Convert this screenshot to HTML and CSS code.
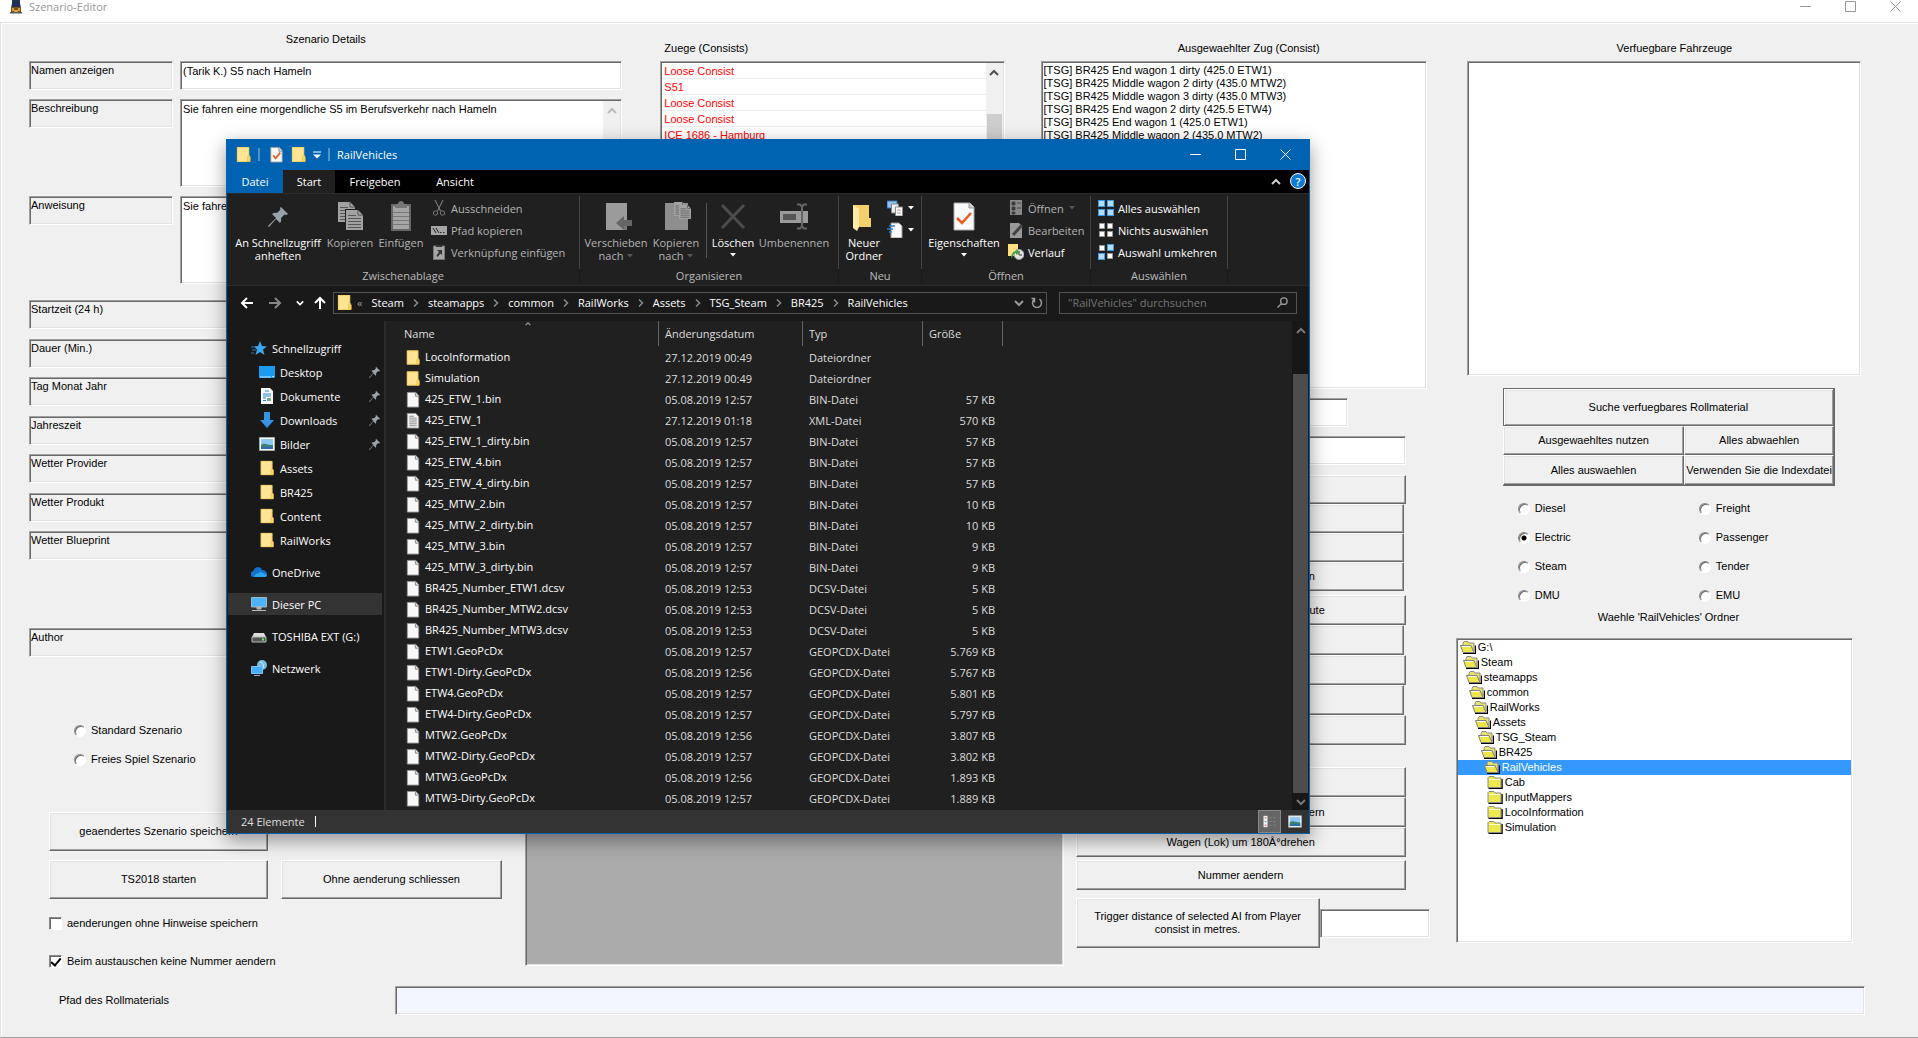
FILE: index.html
```html
<!DOCTYPE html>
<html lang="de">
<head>
<meta charset="utf-8">
<title>Szenario-Editor</title>
<link rel="stylesheet" href="styles.css">
</head>
<body>
<svg class="sprite" aria-hidden="true">
  <symbol id="folder" viewBox="0 0 16 18"><path d="M1 1h13v9h1v7H1z" fill="#ffe593"/><path d="M1.500 1.500h12v9l1 1v5h-13z" fill="none" stroke="#f3cf5e"/><path d="M12.500 16.500v-5l1-1 1.500 1v5z" fill="#ffe07c" stroke="#e9bd3d"/></symbol>
  <symbol id="file" viewBox="0 0 14 18"><path d="M1 1.500h9l3 3.500v12H1z" fill="#f8f8f8" stroke="#9a9a9a"/><path d="M9.500 1.500V5.500H13" fill="#ddd" stroke="#888"/></symbol>
  <symbol id="textfile" viewBox="0 0 14 18"><path d="M1 1.500h9l3 3.500v12H1z" fill="#f4f4f4" stroke="#9a9a9a"/><path d="M3 4.500h5M3 6.500h8M3 8.500h8M3 10.500h8M3 12.500h8M3 14.500h8" stroke="#8a8a8a"/></symbol>
  <symbol id="checkfile" viewBox="0 0 14 18"><path d="M1 1.500h9l3 3.500v12H1z" fill="#fafafa" stroke="#9a9a9a"/><path d="M9.500 1.500V5.500H13" fill="#ddd" stroke="#888"/><path d="M3.500 10l2.500 3 5-6" fill="none" stroke="#e8622a" stroke-width="2"/></symbol>
  <symbol id="pin" viewBox="0 0 20 20"><path d="M13 0l7 7-1.500 1-2-.5-3.500 3.500c.5 2 0 4-1 5L8 12l-7 8-1-1 8-8-4-4c1.500-1 3-1.400 5-1l3.500-3.500-.5-1.500z" fill="#98a2aa"/></symbol>
  <symbol id="chev" viewBox="0 0 10 10"><path d="M1 3l4 4 4-4" fill="none" stroke="currentColor" stroke-width="2"/></symbol>
  <symbol id="chevup" viewBox="0 0 10 10"><path d="M1 7l4-4 4 4" fill="none" stroke="currentColor" stroke-width="2"/></symbol>
  <symbol id="crumb" viewBox="0 0 6 10"><path d="M1 1.500L4.500 5 1 8.500" fill="none" stroke="#8a8a8a" stroke-width="1.500"/></symbol>
  <symbol id="tri" viewBox="0 0 6 4"><path d="M0 0h6L3 3.500z" fill="currentColor"/></symbol>
  <symbol id="page" viewBox="0 0 17 20"><path d="M0 0h12l5 5v15H0z" fill="#a2a2a2"/><path d="M12 0v5h5" fill="none" stroke="#555"/><path d="M2 5.500h8M2 8.500h13M2 11.500h13M2 14.500h13M2 17.500h13" stroke="#555"/></symbol>
  <symbol id="open98" viewBox="0 0 16 13"><path d="M3 12.500h12.500V4.500" fill="none" stroke="#000" stroke-width="1.500"/><path d="M3 10V2.500l1-2h4l1 1.500h5V10z" fill="#e8e26a" stroke="#8a8a8a"/><path d="M.5 4.500h10.500l3 7H3z" fill="#ece64a" stroke="#808080"/><path d="M2 5.500h8.500" stroke="#fff"/></symbol>
  <symbol id="shut98" viewBox="0 0 15 13"><path d="M1 12.500h13.500V3" fill="none" stroke="#000" stroke-width="1.500"/><path d="M.5 11.500v-10l1-1h5l1 1.500h6v9.500z" fill="#ece84e" stroke="#8a8a8a"/><path d="M1.500 3.500h11" stroke="#fffbd0"/></symbol>
  <symbol id="photo" viewBox="0 0 16 14"><path d="M.5.500h15v13H.5z" fill="#fff" stroke="#aaa"/><path d="M2 2h12v10H2z" fill="#8cc8f2"/><path d="M2 8c3-3 6 0 12 0v4H2z" fill="#3b7f78"/><path d="M2 10h12v2H2z" fill="#2d6ca8"/></symbol>
</svg>

<header class="titlebar">
  <svg class="appicon" viewBox="0 0 12 14"><path d="M2 0h8v3l1 5H1l1-5z" fill="#1f3157"/><path d="M1 7h10v6H1z" fill="#7a4e1c"/><path d="M2 8h2v3H2zM8 8h2v3H8zM4 10h4v2H4z" fill="#e0a030"/><path d="M0 12h12v1.500H0z" fill="#55575c"/></svg>
  <h1>Szenario-Editor</h1>
  <div class="winbtns">
    <button aria-label="Minimieren"><svg viewBox="0 0 11 11"><path d="M0 5.500h11" stroke="currentColor"/></svg></button>
    <button aria-label="Maximieren"><svg viewBox="0 0 11 11"><path d="M.5.500h10v10H.5z" fill="none" stroke="currentColor"/></svg></button>
    <button aria-label="Schließen"><svg viewBox="0 0 11 11"><path d="M.5.500l10 10M10.500.500l-10 10" stroke="currentColor"/></svg></button>
  </div>
</header>

<main class="panel">
  <div class="layout">
    <section class="details">
      <h2>Szenario Details</h2>
      <div class="fields">
        <label class="tag sunken" for="name">Namen anzeigen</label>
        <input class="box sunken" id="name" value="(Tarik K.) S5 nach Hameln">
        <label class="tag sunken" for="desc">Beschreibung</label>
        <div class="memo sunken"><textarea id="desc">Sie fahren eine morgendliche S5 im Berufsverkehr nach Hameln</textarea><div class="bar off"><svg><use href="#chevup"/></svg></div></div>
        <label class="tag sunken" for="brief">Anweisung</label>
        <div class="memo sunken"><textarea id="brief">Sie fahren</textarea><div class="bar off"><svg><use href="#chevup"/></svg></div></div>
      </div>
      <div class="meta">
        <div><label class="tag sunken" for="m1">Startzeit (24 h)</label><input class="box sunken" id="m1"></div>
        <div><label class="tag sunken" for="m2">Dauer (Min.)</label><input class="box sunken" id="m2"></div>
        <div><label class="tag sunken" for="m3">Tag Monat Jahr</label><input class="box sunken" id="m3"></div>
        <div><label class="tag sunken" for="m4">Jahreszeit</label><input class="box sunken" id="m4"></div>
        <div><label class="tag sunken" for="m5">Wetter Provider</label><input class="box sunken" id="m5"></div>
        <div><label class="tag sunken" for="m6">Wetter Produkt</label><input class="box sunken" id="m6"></div>
        <div><label class="tag sunken" for="m7">Wetter Blueprint</label><input class="box sunken" id="m7"></div>
      </div>
      <div class="meta author"><div><label class="tag sunken" for="m8">Author</label><input class="box sunken" id="m8"></div></div>
    </section>

    <section class="consists">
      <h2>Zuege (Consists)</h2>
      <div class="list sunken">
        <ul class="rows"><li>Loose Consist</li><li>S51</li><li>Loose Consist</li><li>Loose Consist</li><li>ICE 1686 - Hamburg</li></ul>
        <div class="bar"><svg><use href="#chevup"/></svg><div class="thumb"></div></div>
      </div>
    </section>

    <section class="selected">
      <h2>Ausgewaehlter Zug (Consist)</h2>
      <ul class="wagons sunken"><li>[TSG] BR425 End wagon 1 dirty (425.0 ETW1)</li><li>[TSG] BR425 Middle wagon 2 dirty (435.0 MTW2)</li><li>[TSG] BR425 Middle wagon 3 dirty (435.0 MTW3)</li><li>[TSG] BR425 End wagon 2 dirty (425.5 ETW4)</li><li>[TSG] BR425 End wagon 1 (425.0 ETW1)</li><li>[TSG] BR425 Middle wagon 2 (435.0 MTW2)</li></ul>
    </section>

    <section class="save">
      <div class="kinds">
        <label class="opt"><input type="radio" name="kind">Standard Szenario</label>
        <label class="opt"><input type="radio" name="kind">Freies Spiel Szenario</label>
      </div>
      <div class="actions">
        <button class="btn">geaendertes Szenario speichern</button><span></span>
        <button class="btn">TS2018 starten</button>
        <button class="btn">Ohne aenderung schliessen</button>
      </div>
      <div class="checks">
        <label class="opt"><input type="checkbox">aenderungen ohne Hinweise speichern</label>
        <label class="opt"><input type="checkbox" checked>Beim austauschen keine Nummer aendern</label>
      </div>
    </section>

    <div class="canvas sunken"></div>

    <section class="tools">
      <input class="box sunken short" aria-label="Zugname">
      <input class="box sunken" aria-label="Zugnummer">
      <div class="stack tight">
        <button class="btn" aria-label="Aktion 1"></button>
        <button class="btn narrow" aria-label="Aktion 2"></button>
        <button class="btn narrow" aria-label="Aktion 3"></button>
        <button class="btn narrow tail">n</button>
      </div>
      <div class="stack">
        <button class="btn tail">ute</button>
        <button class="btn narrow" aria-label="Aktion 4"></button>
        <button class="btn" aria-label="Aktion 5"></button>
        <button class="btn narrow" aria-label="Aktion 6"></button>
        <button class="btn" aria-label="Aktion 7"></button>
      </div>
      <div class="stack lower">
        <button class="btn" aria-label="Aktion 8"></button>
        <button class="btn tail">ern</button>
        <button class="btn">Wagen (Lok) um 180Â°drehen</button>
      </div>
      <button class="btn number">Nummer aendern</button>
      <div class="trigger"><button class="btn">Trigger distance of selected AI from Player consist in metres.</button><input class="box sunken" aria-label="Trigger distance"></div>
    </section>

    <section class="stock">
      <h2>Verfuegbare Fahrzeuge</h2>
      <div class="vehicles sunken"></div>
      <div class="pick">
        <button class="btn default">Suche verfuegbares Rollmaterial</button>
        <button class="btn">Ausgewaehltes nutzen</button>
        <button class="btn">Alles abwaehlen</button>
        <button class="btn">Alles auswaehlen</button>
        <button class="btn">Verwenden Sie die Indexdatei</button>
      </div>
      <div class="types">
        <label class="opt"><input type="radio" name="type">Diesel</label><label class="opt"><input type="radio" name="cls">Freight</label>
        <label class="opt"><input type="radio" name="type" checked>Electric</label><label class="opt"><input type="radio" name="cls">Passenger</label>
        <label class="opt"><input type="radio" name="type">Steam</label><label class="opt"><input type="radio" name="cls">Tender</label>
        <label class="opt"><input type="radio" name="type">DMU</label><label class="opt"><input type="radio" name="cls">EMU</label>
      </div>
      <h3>Waehle 'RailVehicles' Ordner</h3>
      <ul class="tree sunken">
        <li style="--d:0"><svg><use href="#open98"/></svg>G:\</li>
        <li style="--d:1"><svg><use href="#open98"/></svg>Steam</li>
        <li style="--d:2"><svg><use href="#open98"/></svg>steamapps</li>
        <li style="--d:3"><svg><use href="#open98"/></svg>common</li>
        <li style="--d:4"><svg><use href="#open98"/></svg>RailWorks</li>
        <li style="--d:5"><svg><use href="#open98"/></svg>Assets</li>
        <li style="--d:6"><svg><use href="#open98"/></svg>TSG_Steam</li>
        <li style="--d:7"><svg><use href="#open98"/></svg>BR425</li>
        <li class="sel" style="--d:8"><svg><use href="#open98"/></svg>RailVehicles</li>
        <li style="--d:9"><svg><use href="#shut98"/></svg>Cab</li>
        <li style="--d:9"><svg><use href="#shut98"/></svg>InputMappers</li>
        <li style="--d:9"><svg><use href="#shut98"/></svg>LocoInformation</li>
        <li style="--d:9"><svg><use href="#shut98"/></svg>Simulation</li>
      </ul>
    </section>
  </div>
  <div class="path"><label for="path">Pfad des Rollmaterials</label><input class="box sunken" id="path"></div>
</main>

<section class="explorer" aria-label="RailVehicles">
  <div class="cap">
    <svg class="i16"><use href="#folder"/></svg><i></i><svg class="i16"><use href="#checkfile"/></svg><svg class="i16"><use href="#folder"/></svg>
    <svg class="qa" viewBox="0 0 8 8"><path d="M0 1h8" stroke="#fff"/><path d="M0 3.500h8L4 7.500z" fill="#fff"/></svg><i></i>
    <span>RailVehicles</span>
    <div class="winbtns">
      <button aria-label="Minimieren"><svg viewBox="0 0 11 11"><path d="M0 5.500h11" stroke="currentColor"/></svg></button>
      <button aria-label="Maximieren"><svg viewBox="0 0 11 11"><path d="M.5.500h10v10H.5z" fill="none" stroke="currentColor"/></svg></button>
      <button aria-label="Schließen"><svg viewBox="0 0 11 11"><path d="M.5.500l10 10M10.500.500l-10 10" stroke="currentColor"/></svg></button>
    </div>
  </div>
  <nav class="tabs">
    <button class="datei">Datei</button><button class="on">Start</button><button>Freigeben</button><button>Ansicht</button>
    <svg class="fold"><use href="#chevup"/></svg><button class="help" aria-label="Hilfe">?</button>
  </nav>
  <div class="ribbon">
    <div class="group g1">
      <div class="items">
        <button class="big w94"><svg viewBox="0 0 32 32"><svg x="6" y="6" width="20" height="20"><use href="#pin"/></svg></svg>An Schnellzugriff anheften</button>
        <button class="big w50 dim"><svg viewBox="0 0 32 32"><svg x="4" y="1" width="17" height="20"><use href="#page"/></svg><path d="M11 8h14l5 5v18H11z" fill="#202020"/><svg x="12" y="9" width="17" height="20"><use href="#page"/></svg></svg>Kopieren</button>
        <button class="big w52 dim"><svg viewBox="0 0 32 32"><path d="M6 3h20v27H6z" fill="#666"/><path d="M8 5h16v23H8z" fill="#a5a5a5"/><path d="M10 3h3c0-4 6-4 6 0h3v4H10z" fill="#777"/><path d="M8 11.500h16M8 15.500h16M8 19.500h16M8 23.500h16" stroke="#777"/></svg>Einfügen</button>
        <div class="smalls">
          <button class="dim"><svg viewBox="0 0 16 16"><path d="M4 0l5.500 11M12 0L6.500 11" stroke="#8a8a8a"/><circle cx="4.500" cy="13" r="2.200" fill="none" stroke="#777"/><circle cx="11.500" cy="13" r="2.200" fill="none" stroke="#777"/></svg>Ausschneiden</button>
          <button class="dim"><svg viewBox="0 0 16 16"><path d="M0 4h16v9H0z" fill="#a5a5a5"/><path d="M2 6l3 5M5 6l3 5M9 10.500h1.500M12 10.500h1.500" stroke="#222"/></svg>Pfad kopieren</button>
          <button class="dim"><svg viewBox="0 0 16 16"><path d="M2.500 2h11v13.500h-11z" fill="#a5a5a5" stroke="#777"/><path d="M5 1h6v2H5zM6 6h5v5L9.500 9.500 6.500 13 5.500 11.500 8 8z" fill="#333"/></svg>Verknüpfung einfügen</button>
        </div>
      </div>
      <p>Zwischenablage</p>
    </div>
    <div class="group g2">
      <div class="items">
        <button class="big w66 dim"><svg viewBox="0 0 32 32"><path d="M6 2h21v27H6z" fill="#9b9b9b"/><path d="M24 19v10h3V19z" fill="#777"/><path d="M16 22l8-7v4h8v6h-8v4z" fill="#666"/></svg>Verschieben <span>nach <svg class="tri"><use href="#tri"/></svg></span></button>
        <button class="big w54 dim"><svg viewBox="0 0 32 32"><path d="M5 2h23v27H5z" fill="#8e8e8e"/><svg x="14" y="0" width="12" height="16"><use href="#page"/></svg><svg x="19" y="3" width="12" height="16"><use href="#page"/></svg></svg>Kopieren <span>nach <svg class="tri"><use href="#tri"/></svg></span></button>
        <i></i>
        <button class="big w52"><svg viewBox="0 0 32 32"><path d="M5 4l22 23M27 4L5 27" stroke="#4c4c4c" stroke-width="3"/></svg>Löschen<svg class="tri"><use href="#tri"/></svg></button>
        <button class="big w70 dim"><svg viewBox="0 0 32 32"><path d="M2 10h28v12H2z" fill="#9a9a9a"/><path d="M5 13h13v6H5z" fill="#555"/><path d="M19 3.500h3l2 2 2-2h3M24 5v21M19 27.500h3l2-2 2 2h3" stroke="#666" stroke-width="2" fill="none"/></svg>Umbenennen</button>
      </div>
      <p>Organisieren</p>
    </div>
    <div class="group g3">
      <div class="items">
        <button class="big w46"><svg viewBox="0 0 32 32"><path d="M5 4h16v13h2v9H9v3l-4-3z" fill="#f5cf6b"/><path d="M5 4l6 4v18l-2 4-4-3z" fill="#ffeba6"/></svg>Neuer Ordner</button>
        <div class="smalls">
          <button aria-label="Neues Element"><svg viewBox="0 0 16 16"><path d="M0 1h10v7H0z" fill="#8dc4ef" stroke="#2c77ba"/><path d="M4.500 4h7v9h-7z" fill="#eee" stroke="#888"/><path d="M8.500 7h7v9h-7z" fill="#fff" stroke="#888"/><path d="M10 10h4M10 13h4" stroke="#d87"/></svg><svg class="tri"><use href="#tri"/></svg></button>
          <button aria-label="Einfacher Zugriff"><svg viewBox="0 0 16 16"><path d="M4 1h8l3 3v12H4z" fill="#fafafa" stroke="#999"/><path d="M2 4h6M0 7h6M2 10h3" stroke="#2d7dd2" stroke-width="1.500"/></svg><svg class="tri"><use href="#tri"/></svg></button>
        </div>
      </div>
      <p>Neu</p>
    </div>
    <div class="group g4">
      <div class="items">
        <button class="big w80"><svg viewBox="0 0 32 32"><path d="M6 2h16l4 4v23H6z" fill="#fafafa" stroke="#aaa"/><path d="M21 2v5h5" fill="#ccc" stroke="#999"/><path d="M9 17l5 5 9-10" fill="none" stroke="#f0591c" stroke-width="2.500"/></svg>Eigenschaften<svg class="tri"><use href="#tri"/></svg></button>
        <div class="smalls">
          <button class="dim"><svg viewBox="0 0 16 16"><path d="M2 0h12v15H2z" fill="#888"/><path d="M4 2h3v3H4zM4 7h3v3H4zM4 12h3v2H4zM9 3h4M9 8h4" fill="#333" stroke="#444"/></svg>Öffnen <svg class="tri"><use href="#tri"/></svg></button>
          <button class="dim"><svg viewBox="0 0 16 16"><path d="M2 1h9l3 3v12H2z" fill="#999"/><path d="M5 13l9-10" stroke="#444" stroke-width="3"/></svg>Bearbeiten</button>
          <button><svg viewBox="0 0 16 16"><path d="M0 0h10v12H0z" fill="#ffdf80"/><circle cx="11" cy="10.500" r="5" fill="#e4e4e4" stroke="#999"/><path d="M11 7v4h3" stroke="#333" fill="none"/><path d="M3 15c0-5 2-8 6-8l-1-2 4 3-4 3v-2c-2 0-3 3-5 6z" fill="#3da23d"/></svg>Verlauf</button>
        </div>
      </div>
      <p>Öffnen</p>
    </div>
    <div class="group g5">
      <div class="items">
        <div class="smalls">
          <button><svg viewBox="0 0 16 16"><path d="M0 0h7v7H0zM9 0h7v7H9zM0 9h7v7H0zM9 9h7v7H9z" fill="#3c9be8"/><path d="M1 1h5v5H1zM10 1h5v5h-5zM1 10h5v5H1zM10 10h5v5h-5z" fill="#b5dcfb"/></svg>Alles auswählen</button>
          <button><svg viewBox="0 0 16 16"><path d="M1.500 1.500h5v5h-5zM9.500 1.500h5v5h-5zM1.500 9.500h5v5h-5zM9.500 9.500h5v5h-5z" fill="#fff" stroke="#999"/></svg>Nichts auswählen</button>
          <button><svg viewBox="0 0 16 16"><path d="M9 0h7v7H9zM0 9h7v7H0z" fill="#3c9be8"/><path d="M10 1h5v5h-5zM1 10h5v5H1z" fill="#b5dcfb"/><path d="M1.500 1.500h5v5h-5zM9.500 9.500h5v5h-5z" fill="#fff" stroke="#999"/></svg>Auswahl umkehren</button>
        </div>
      </div>
      <p>Auswählen</p>
    </div>
  </div>
  <div class="address">
    <button aria-label="Zurück"><svg viewBox="0 0 14 12"><path d="M13 6H2M7 1L2 6l5 5" fill="none" stroke="#fff" stroke-width="2"/></svg></button>
    <button aria-label="Vorwärts"><svg viewBox="0 0 14 12"><path d="M1 6h11M7 1l5 5-5 5" fill="none" stroke="#888" stroke-width="2"/></svg></button>
    <button class="mini" aria-label="Verlauf"><svg><use href="#chev"/></svg></button>
    <button class="up" aria-label="Nach oben"><svg viewBox="0 0 12 13"><path d="M6 13V2M1 7l5-5 5 5" fill="none" stroke="#fff" stroke-width="2"/></svg></button>
    <div class="crumbs">
      <svg class="i16"><use href="#folder"/></svg><span>«</span>
      <a href="#">Steam</a><svg><use href="#crumb"/></svg><a href="#">steamapps</a><svg><use href="#crumb"/></svg><a href="#">common</a><svg><use href="#crumb"/></svg><a href="#">RailWorks</a><svg><use href="#crumb"/></svg><a href="#">Assets</a><svg><use href="#crumb"/></svg><a href="#">TSG_Steam</a><svg><use href="#crumb"/></svg><a href="#">BR425</a><svg><use href="#crumb"/></svg><a href="#">RailVehicles</a>
      <button class="drop" aria-label="Vorherige Orte"><svg><use href="#chev"/></svg></button>
      <button aria-label="Aktualisieren"><svg viewBox="0 0 12 12"><path d="M8.500 2.200a4.500 4.500 0 1 1-5 0M3.500 5.500v-4h-3" fill="none" stroke="#999" stroke-width="1.500"/></svg></button>
    </div>
    <div class="search"><input aria-label="Suche" placeholder="&quot;RailVehicles&quot; durchsuchen"><svg viewBox="0 0 12 12"><circle cx="7.500" cy="4.500" r="3.500" fill="none" stroke="#999" stroke-width="1.500"/><path d="M5 7l-4.500 4.500" stroke="#999" stroke-width="1.500"/></svg></div>
  </div>
  <div class="body">
    <ul class="side">
      <li class="first"><svg viewBox="0 0 16 16"><path d="M9 1l2 5 5 .5-4 3 1.500 5.500-4.500-3-4.500 3L6 9.500l-3-3 4-.5z" fill="#3aa7ef"/><path d="M0 7h4M1 10h4M0 13h3" stroke="#2a78b8"/></svg>Schnellzugriff</li>
      <li class="sub"><svg viewBox="0 0 16 16"><path d="M0 2h16v12H0z" fill="#1a9bf0"/><path d="M1 13h11M13 12.500h2" stroke="#bfe4ff"/></svg>Desktop<svg class="p"><use href="#pin"/></svg></li>
      <li class="sub"><svg viewBox="0 0 16 16"><path d="M2 0h9l3 3v13H2z" fill="#f6f6f6"/><path d="M6 3h4M4 6h8M4 8h8M4 10h3M4 12.500h3" stroke="#2c86cf"/><path d="M8 10h4v3H8z" fill="#6ca88d"/></svg>Dokumente<svg class="p"><use href="#pin"/></svg></li>
      <li class="sub"><svg viewBox="0 0 16 16"><path d="M5 0h6v8h4l-7 8-7-8h4z" fill="#3794e4"/></svg>Downloads<svg class="p"><use href="#pin"/></svg></li>
      <li class="sub"><svg><use href="#photo"/></svg>Bilder<svg class="p"><use href="#pin"/></svg></li>
      <li class="sub"><svg><use href="#folder"/></svg>Assets</li>
      <li class="sub"><svg><use href="#folder"/></svg>BR425</li>
      <li class="sub"><svg><use href="#folder"/></svg>Content</li>
      <li class="sub"><svg><use href="#folder"/></svg>RailWorks</li>
      <li class="root"><svg viewBox="0 0 16 16"><path d="M3 13a3 3 0 0 1-.5-6C3 3 9 1 11 6c3 0 5 2 5 4s-1 3-3 3z" fill="#1271c9"/><path d="M4 13c-2-2 3-4 6-5l6 3c0 2-2 2-3 2z" fill="#2aa3ec"/></svg>OneDrive</li>
      <li class="root cur"><svg viewBox="0 0 16 16"><path d="M.5 1.500h15v9.500H.5z" fill="#4fb4f7" stroke="#9fb4c4"/><path d="M6 11h4v2H6zM1 14.500h14" fill="#aaa" stroke="#bbb"/></svg>Dieser PC</li>
      <li class="root"><svg viewBox="0 0 16 16"><path d="M3 5h10l2 4H1z" fill="#ddd"/><path d="M1 9h14v5H1z" fill="#555" stroke="#bbb"/><path d="M11 11.500h2" stroke="#5f5" stroke-width="2"/></svg>TOSHIBA EXT (G:)</li>
      <li class="root"><svg viewBox="0 0 16 16"><circle cx="11" cy="5" r="5" fill="#79bce0"/><path d="M9 2c3 0 4 3 3 6" stroke="#d3f0fa" fill="none"/><path d="M.5 6.500h11v7H.5z" fill="#45aef5" stroke="#79c5f7"/><path d="M3 15.500h6" stroke="#9ad"/></svg>Netzwerk</li>
    </ul>
    <div class="files">
      <table>
        <colgroup><col class="c1"><col class="c2"><col class="c3"><col class="c4"><col></colgroup>
        <thead><tr><th>Name<svg class="sort"><use href="#chevup"/></svg></th><th>Änderungsdatum</th><th>Typ</th><th>Größe</th><td></td></tr></thead>
        <tbody>
        <tr><td><svg><use href="#folder"/></svg>LocoInformation</td><td>27.12.2019 00:49</td><td>Dateiordner</td><td></td><td></td></tr>
        <tr><td><svg><use href="#folder"/></svg>Simulation</td><td>27.12.2019 00:49</td><td>Dateiordner</td><td></td><td></td></tr>
        <tr><td><svg><use href="#file"/></svg>425_ETW_1.bin</td><td>05.08.2019 12:57</td><td>BIN-Datei</td><td>57 KB</td><td></td></tr>
        <tr><td><svg><use href="#textfile"/></svg>425_ETW_1</td><td>27.12.2019 01:18</td><td>XML-Datei</td><td>570 KB</td><td></td></tr>
        <tr><td><svg><use href="#file"/></svg>425_ETW_1_dirty.bin</td><td>05.08.2019 12:57</td><td>BIN-Datei</td><td>57 KB</td><td></td></tr>
        <tr><td><svg><use href="#file"/></svg>425_ETW_4.bin</td><td>05.08.2019 12:57</td><td>BIN-Datei</td><td>57 KB</td><td></td></tr>
        <tr><td><svg><use href="#file"/></svg>425_ETW_4_dirty.bin</td><td>05.08.2019 12:57</td><td>BIN-Datei</td><td>57 KB</td><td></td></tr>
        <tr><td><svg><use href="#file"/></svg>425_MTW_2.bin</td><td>05.08.2019 12:57</td><td>BIN-Datei</td><td>10 KB</td><td></td></tr>
        <tr><td><svg><use href="#file"/></svg>425_MTW_2_dirty.bin</td><td>05.08.2019 12:57</td><td>BIN-Datei</td><td>10 KB</td><td></td></tr>
        <tr><td><svg><use href="#file"/></svg>425_MTW_3.bin</td><td>05.08.2019 12:57</td><td>BIN-Datei</td><td>9 KB</td><td></td></tr>
        <tr><td><svg><use href="#file"/></svg>425_MTW_3_dirty.bin</td><td>05.08.2019 12:57</td><td>BIN-Datei</td><td>9 KB</td><td></td></tr>
        <tr><td><svg><use href="#file"/></svg>BR425_Number_ETW1.dcsv</td><td>05.08.2019 12:53</td><td>DCSV-Datei</td><td>5 KB</td><td></td></tr>
        <tr><td><svg><use href="#file"/></svg>BR425_Number_MTW2.dcsv</td><td>05.08.2019 12:53</td><td>DCSV-Datei</td><td>5 KB</td><td></td></tr>
        <tr><td><svg><use href="#file"/></svg>BR425_Number_MTW3.dcsv</td><td>05.08.2019 12:53</td><td>DCSV-Datei</td><td>5 KB</td><td></td></tr>
        <tr><td><svg><use href="#file"/></svg>ETW1.GeoPcDx</td><td>05.08.2019 12:57</td><td>GEOPCDX-Datei</td><td>5.769 KB</td><td></td></tr>
        <tr><td><svg><use href="#file"/></svg>ETW1-Dirty.GeoPcDx</td><td>05.08.2019 12:56</td><td>GEOPCDX-Datei</td><td>5.767 KB</td><td></td></tr>
        <tr><td><svg><use href="#file"/></svg>ETW4.GeoPcDx</td><td>05.08.2019 12:57</td><td>GEOPCDX-Datei</td><td>5.801 KB</td><td></td></tr>
        <tr><td><svg><use href="#file"/></svg>ETW4-Dirty.GeoPcDx</td><td>05.08.2019 12:57</td><td>GEOPCDX-Datei</td><td>5.797 KB</td><td></td></tr>
        <tr><td><svg><use href="#file"/></svg>MTW2.GeoPcDx</td><td>05.08.2019 12:56</td><td>GEOPCDX-Datei</td><td>3.807 KB</td><td></td></tr>
        <tr><td><svg><use href="#file"/></svg>MTW2-Dirty.GeoPcDx</td><td>05.08.2019 12:57</td><td>GEOPCDX-Datei</td><td>3.802 KB</td><td></td></tr>
        <tr><td><svg><use href="#file"/></svg>MTW3.GeoPcDx</td><td>05.08.2019 12:56</td><td>GEOPCDX-Datei</td><td>1.893 KB</td><td></td></tr>
        <tr><td><svg><use href="#file"/></svg>MTW3-Dirty.GeoPcDx</td><td>05.08.2019 12:57</td><td>GEOPCDX-Datei</td><td>1.889 KB</td><td></td></tr>
        </tbody>
      </table>
    </div>
    <div class="bar dark"><svg><use href="#chevup"/></svg><div class="thumb"></div><svg><use href="#chev"/></svg></div>
  </div>
  <div class="status"><span>24 Elemente</span><i></i>
    <button class="view on" aria-label="Details"><svg viewBox="0 0 16 16"><path d="M0 1h5v14H0z" fill="#eee"/><path d="M1.500 3.500h2M1.500 12.500h2" stroke="#c33"/><path d="M1.500 8h2" stroke="#37a"/><path d="M7 3.500h3M12 3.500h3M7 8h3M12 8h3M7 12.500h3M12 12.500h3" stroke="#8a8a8a"/></svg></button>
    <button class="view" aria-label="Große Symbole"><svg><use href="#photo"/></svg></button>
  </div>
</section>
</body>
</html>
```
FILE: styles.css
```css
* { box-sizing: border-box; }
body { margin: 0; min-height: 100vh; display: flex; flex-direction: column; position: relative; background: #fff; color: #000; font: 11px/13px "Liberation Sans", Arial, sans-serif; }
button, input, textarea { font: inherit; color: inherit; margin: 0; border-radius: 0; }
button { padding: 0; border: 0; background: none; }
input:focus, textarea:focus { outline: none; }
ul { list-style: none; margin: 0; padding: 0; }
h1, h2, h3, p { margin: 0; font: inherit; }
svg { flex: none; display: block; }
.sprite { position: absolute; width: 0; height: 0; }

/* editor frame */
.titlebar { height: 22px; display: flex; align-items: flex-start; color: #999; padding-left: 10px; font: 11px/14px "Open Sans", sans-serif; }
.appicon { width: 12px; height: 14px; margin-right: 7px; }
.winbtns { margin-left: auto; display: flex; }
.winbtns button { width: 45px; display: flex; justify-content: center; align-items: center; }
.winbtns svg { width: 11px; height: 11px; }
.titlebar .winbtns button { height: 13px; }
.panel { flex: 1; background: #f0f0f0; border: 1px solid #e3e3e3; border-bottom-color: #a0a0a0; border-right: 0; box-shadow: inset 1px 1px #fff; padding: 9px 53px 20px 28px; }
.layout { display: grid; padding-right: 4px; grid-template-columns: 496fr 135fr 344fr 36fr 23fr 12fr 354fr 26fr 405fr; grid-template-rows: 357px 325px auto; }
.layout > * { min-width: 0; }
h2, h3 { line-height: 14px; text-align: center; }

.sunken { border: 1px solid; border-color: #a0a0a0 #fff #fff #a0a0a0; box-shadow: inset 1px 1px #696969, inset -1px -1px #e3e3e3; background: #fff; }
.btn { border: 1px solid; border-color: #fff #696969 #696969 #fff; box-shadow: inset -1px -1px #a0a0a0, inset 1px 1px #e3e3e3; background: #f0f0f0; text-align: center; }
.tag { background: #f0f0f0; height: 29px; padding: 2px 1px; }
.box { height: 29px; width: 100%; padding: 0 2px 10px; min-width: 0; }
.bar { width: 17px; background: #f0f0f0; color: #505050; display: flex; flex-direction: column; align-items: center; padding-top: 5px; }
.bar svg { width: 10px; height: 10px; }
.bar.off { color: #bbb; }

.details { grid-area: 1 / 1 / 3 / 3; padding-right: 38px; }
.details h2 { margin-bottom: 15px; }
.fields { display: grid; grid-template-columns: 144px 1fr; gap: 9px 7px; margin-bottom: 16px; }
.memo { height: 88px; display: flex; padding: 1px; }
.memo textarea { flex: 1; border: 0; resize: none; padding: 2px 1px; background: none; overflow: hidden; }
.meta { min-height: 260px; display: flex; flex-direction: column; justify-content: space-between; }
.meta > div { display: grid; grid-template-columns: 280px 1fr; gap: 7px; }
.meta.author { min-height: 29px; margin-top: 68px; }

.consists { grid-area: 1 / 3 / 2 / 4; padding-top: 9px; display: flex; flex-direction: column; }
.consists h2 { text-align: left; padding-left: 4px; margin-bottom: 6px; }
.list { flex: 1; display: flex; padding: 1px; }
.rows { flex: 1; color: #f00; }
.rows li { height: 16px; line-height: 16px; padding-left: 2px; border-bottom: 1px solid #ececec; }
.list .thumb { width: 15px; height: 90px; background: #cdcdcd; margin-top: 36px; }

.selected { grid-area: 1 / 5 / 2 / 8; padding: 9px 3px 0 0; display: flex; flex-direction: column; }
.selected h2 { padding-left: 30px; margin-bottom: 6px; }
.wagons { flex: 1; padding: 2px; white-space: nowrap; }

.save { grid-area: 3 / 1 / 4 / 2; padding-left: 20px; }
.opt { display: flex; align-items: center; gap: 5px; }
.kinds { padding: 2px 0 0 25px; margin-bottom: 38px; }
.kinds .opt { height: 29px; }
.actions { display: grid; grid-template-columns: 219px 221px; gap: 9px 13px; margin-bottom: 5px; }
.actions .btn { height: 39px; }
.checks .opt { height: 38px; }
input[type=radio], input[type=checkbox] { appearance: none; width: 12px; height: 12px; flex: none; border: 1px solid; border-color: #888 #fff #fff #888; box-shadow: inset 1px 1px #696969; background: #fff; }
input[type=radio] { border-radius: 6px; }
input[type=radio]:checked { background: radial-gradient(circle, #000 2px, #fff 3px); }
input[type=checkbox] { width: 13px; height: 13px; }
input[type=checkbox]:checked { display: grid; place-items: center; }
input[type=checkbox]:checked::before { content: ""; width: 4px; height: 8px; margin-bottom: 3px; border: solid #000; border-width: 0 2px 2px 0; rotate: 40deg; }
.canvas { grid-area: 3 / 2 / 4 / 6; background: #ababab; margin-bottom: 14px; }

.tools { grid-area: 2 / 7 / 4 / 8; padding-top: 9px; }
.tools > .box { display: block; width: calc(100% - 24px); margin-bottom: 10px; }
.tools > .short { width: calc(100% - 82px); margin-bottom: 9px; }
.stack { display: flex; flex-direction: column; margin: 0 24px 22px 0; }
.stack .btn { height: 30px; }
.stack.tight { margin-bottom: 4px; }
.stack.tight .btn { height: 29px; }
.stack.lower { margin-bottom: 3px; }
.btn.narrow { margin-right: 2px; }
.btn.tail { text-align: right; padding-right: 80px; }
.btn.narrow.tail { padding-right: 88px; }
.number { display: block; width: calc(100% - 24px); height: 30px; margin-bottom: 8px; }
.trigger { display: flex; align-items: center; }
.trigger .btn { flex: 0 0 244px; height: 50px; padding: 0 12px; }

.stock { grid-area: 1 / 9 / 4 / 10; padding-top: 9px; }
.stock h2 { padding-left: 32px; margin-bottom: 6px; }
.vehicles { height: 315px; margin-left: 11px; margin-bottom: 12px; }
.pick { margin: 0 26px 8px 47px; display: grid; grid-template-columns: 182fr 150fr; grid-template-rows: 38px 29px 30px; border: solid #696969; border-width: 0 1px 1px 0; }
.pick .btn { white-space: nowrap; }
.pick .default { grid-column: 1 / 3; border-color: #696969; box-shadow: inset 1px 1px #fff, inset -1px -1px #a0a0a0, inset 2px 2px #e3e3e3; }
.types { display: grid; grid-template-columns: 181px 1fr; padding-left: 62px; }
.types .opt { height: 29px; }
.stock h3 { padding-left: 20px; margin-bottom: 14px; }
.tree { height: 305px; margin-right: 8px; padding: 1px; }
.tree li { height: 15px; display: flex; align-items: center; gap: 2px; padding-left: calc(2px + var(--d) * 3px); }
.tree svg { width: 16px; height: 13px; }
.tree .sel { background: #39f; color: #fff; }

.path { display: flex; align-items: center; padding: 6px 0 0 30px; }
.path label { width: 336px; }
.path .box { flex: 1; background: #f3f6fc; }

/* explorer window, floating above the editor */
.explorer { position: absolute; left: 226px; top: 139px; width: 1084px; border: 1px solid #0063b1; border-top: 0; background: #191919; color: #fff; font: 11px/13px "Open Sans", sans-serif; box-shadow: 0 6px 18px rgba(0, 0, 0, .4); }
.cap { height: 31px; background: #0063b1; display: flex; align-items: center; padding: 0 1px 0 9px; gap: 7px; }
.i16 { width: 15px; height: 17px; }
.cap i { width: 2px; height: 13px; border: solid #4f93c8; border-width: 0 1px; }
.cap i + .i16 { margin-left: 2px; }
.qa { width: 8px; height: 8px; }
.cap .winbtns button { height: 30px; }
.tabs { height: 23px; background: #000; display: flex; align-items: stretch; }
.tabs button { width: 80px; }
.tabs .datei { width: 56px; background: #0063b1; }
.tabs .on { width: 52px; background: #202020; }
.fold { width: 10px; height: 10px; margin: 7px 9px 0 auto; color: #ccc; }
.tabs .help { width: 16px; height: 16px; margin: 3px 3px 0 0; border: 1px solid #fff; border-radius: 8px; background: #0f7ad8; line-height: 13px; font-weight: 600; }

.ribbon { height: 93px; background: #202020; display: flex; border-bottom: 1px solid #2b2b2b; border-top: 1px solid #2b2b2b; }
.group { display: flex; flex-direction: column; border-right: 1px solid; border-image: linear-gradient(#202020 3px, #444 3px, #444 74px, #191919 74px) 1; }
.group p { text-align: center; color: #bbb; line-height: 14px; }
.items { height: 75px; display: flex; }
.g1 { width: 353px; }
.g1 .items { padding-left: 4px; }
.g2 { width: 259px; }
.g2 .items { padding-left: 3px; }
.g3 { width: 83px; }
.g3 .items { padding-left: 2px; }
.g4 { width: 169px; }
.g4 .items { padding-left: 2px; }
.g5 { width: 137px; }
.g5 .items { padding-left: 3px; }
.items i { width: 1px; height: 55px; margin: 9px 0 0 3px; background: #555; }
.big { padding-top: 7px; display: flex; flex-direction: column; align-items: center; }
.big > svg { width: 32px; height: 32px; margin-bottom: 3px; }
.big span { display: flex; align-items: center; gap: 4px; }
.big > .tri, .tri, .smalls .tri { width: 6px; height: 4px; margin: 0; }
.big > .tri { margin-top: 4px; }
.dim { color: #b4b4b4; }
.dim .tri { color: #555; }
.w94 { width: 94px; }
.w50 { width: 50px; }
.w52 { width: 52px; }
.w66 { width: 66px; }
.w54 { width: 54px; }
.w70 { width: 70px; }
.w46 { width: 46px; }
.w80 { width: 80px; }
.smalls { padding: 3px 0 0 4px; }
.g3 .smalls { padding-left: 0; }
.smalls button { height: 22px; display: flex; align-items: center; gap: 4px; white-space: nowrap; }
.smalls svg { width: 16px; height: 16px; }
.smalls .tri { margin-left: 1px; }

.address { height: 35px; display: flex; align-items: center; padding: 0 12px 2px 13px; }
.address > button { margin-right: 14px; }
.address > button svg { width: 14px; height: 12px; }
.address > .mini { margin-right: 10px; }
.address > .mini svg { width: 8px; height: 8px; }
.address > .up { margin-right: 7px; }
.address > .up svg { width: 12px; height: 13px; }
.crumbs { flex: 1; height: 22px; border: 1px solid #535353; display: flex; align-items: center; padding: 0 3px; }
.crumbs a { color: #fff; text-decoration: none; }
.crumbs a + svg { width: 6px; height: 10px; margin: 0 9px; }
.crumbs span { margin: 0 9px 0 5px; color: #999; }
.crumbs button svg { width: 12px; height: 12px; }
.crumbs .drop { margin: 0 7px 0 auto; color: #999; }
.crumbs .drop svg { width: 10px; height: 10px; }
.search { width: 238px; height: 22px; margin-left: 12px; border: 1px solid #535353; display: flex; align-items: center; padding: 0 8px; }
.search input { flex: 1; min-width: 0; border: 0; padding: 0; background: none; }
.search input::placeholder { color: #757575; opacity: 1; }
.search svg { width: 11px; height: 11px; }

.body { display: flex; height: 489px; }
.side { width: 157px; padding: 15px 2px 0 1px; }
.side li { height: 24px; display: flex; align-items: center; gap: 5px; padding-left: 23px; white-space: nowrap; }
.side .sub { padding-left: 31px; }
.side svg { width: 16px; height: 16px; }
.side .p { width: 11px; height: 11px; margin: 0 2px 0 auto; }
.side .root { height: 22px; margin-top: 10px; }
.side .sub + .root { margin-top: 9px; }
.side .cur { background: #333; }
.files { flex: 1; background: #202020; border-left: 2px solid #2b2b2b; }
.files table { width: 100%; table-layout: fixed; border-collapse: collapse; }
.c1 { width: 273px; }
.c2 { width: 144px; }
.c3 { width: 120px; }
.c4 { width: 80px; }
.files th { height: 26px; font-weight: 400; text-align: left; padding: 0 0 2px 6px; color: #dedede; background: linear-gradient(#636363, #636363) right top / 1px 25px no-repeat; position: relative; }
.files th:first-child { padding-left: 18px; }
.sort { position: absolute; left: 138px; top: 0; width: 8px; height: 6px; color: #999; }
.files td { height: 21px; padding: 0 0 1px 6px; color: #dedede; white-space: nowrap; }
.files td:first-child { padding: 0 0 0 20px; color: #fff; }
.files td:nth-child(4) { text-align: right; padding-right: 8px; }
.files td svg { display: inline-block; vertical-align: -5px; width: 14px; height: 17px; margin-right: 5px; }
.bar.dark { width: 17px; background: #171717; color: #777; padding: 5px 0 3px; }
.dark .thumb { width: 15px; flex: 1; margin: 38px 0 4px; background: #4d4d4d; }
.status { height: 23px; background: #333; display: flex; align-items: center; padding-left: 14px; color: #dedede; }
.status i { width: 1px; height: 11px; background: #fff; margin-left: 10px; }
.view { width: 23px; height: 23px; display: flex; align-items: center; justify-content: center; }
.view svg { width: 14px; height: 13px; }
.view.on { margin-left: auto; background: #666; border: 1px solid #888; }
.view:last-child { width: 28px; }
```
